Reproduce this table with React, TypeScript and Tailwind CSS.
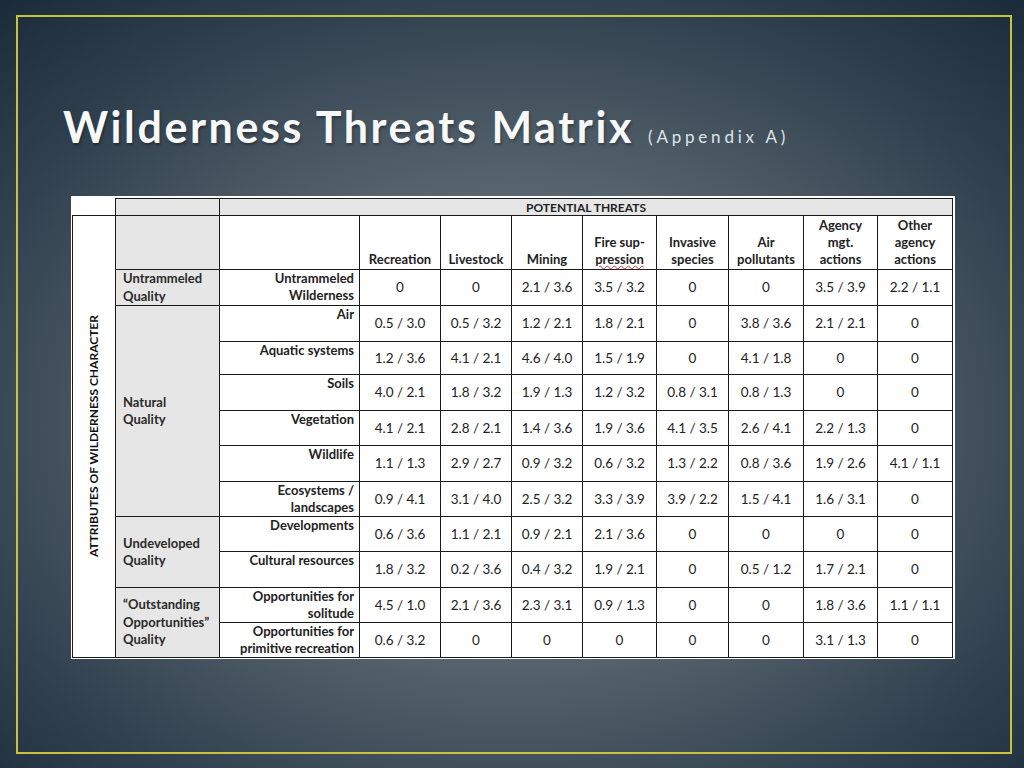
import React from "react";

const cols = [43, 104, 140, 81, 71, 71, 74, 72, 75, 74, 75];

type Row = { attr: string[]; vals: string[]; h: number; q?: { lines: string[]; span: number; top?: boolean } };

const rows: Row[] = [
  { q: { lines: ["Untrammeled", "Quality"], span: 1, top: true }, attr: ["Untrammeled", "Wilderness"], vals: ["0", "0", "2.1 / 3.6", "3.5 / 3.2", "0", "0", "3.5 / 3.9", "2.2 / 1.1"], h: 35 },
  { q: { lines: ["Natural", "Quality"], span: 6 }, attr: ["Air"], vals: ["0.5 / 3.0", "0.5 / 3.2", "1.2 / 2.1", "1.8 / 2.1", "0", "3.8 / 3.6", "2.1 / 2.1", "0"], h: 36 },
  { attr: ["Aquatic systems"], vals: ["1.2 / 3.6", "4.1 / 2.1", "4.6 / 4.0", "1.5 / 1.9", "0", "4.1 / 1.8", "0", "0"], h: 33 },
  { attr: ["Soils"], vals: ["4.0 / 2.1", "1.8 / 3.2", "1.9 / 1.3", "1.2 / 3.2", "0.8 / 3.1", "0.8 / 1.3", "0", "0"], h: 36 },
  { attr: ["Vegetation"], vals: ["4.1 / 2.1", "2.8 / 2.1", "1.4 / 3.6", "1.9 / 3.6", "4.1 / 3.5", "2.6 / 4.1", "2.2 / 1.3", "0"], h: 35 },
  { attr: ["Wildlife"], vals: ["1.1 / 1.3", "2.9 / 2.7", "0.9 / 3.2", "0.6 / 3.2", "1.3 / 2.2", "0.8 / 3.6", "1.9 / 2.6", "4.1 / 1.1"], h: 36 },
  { attr: ["Ecosystems /", "landscapes"], vals: ["0.9 / 4.1", "3.1 / 4.0", "2.5 / 3.2", "3.3 / 3.9", "3.9 / 2.2", "1.5 / 4.1", "1.6 / 3.1", "0"], h: 35 },
  { q: { lines: ["Undeveloped", "Quality"], span: 2 }, attr: ["Developments"], vals: ["0.6 / 3.6", "1.1 / 2.1", "0.9 / 2.1", "2.1 / 3.6", "0", "0", "0", "0"], h: 35 },
  { attr: ["Cultural resources"], vals: ["1.8 / 3.2", "0.2 / 3.6", "0.4 / 3.2", "1.9 / 2.1", "0", "0.5 / 1.2", "1.7 / 2.1", "0"], h: 36 },
  { q: { lines: ["\u201COutstanding", "Opportunities\u201D", "Quality"], span: 2 }, attr: ["Opportunities for", "solitude"], vals: ["4.5 / 1.0", "2.1 / 3.6", "2.3 / 3.1", "0.9 / 1.3", "0", "0", "1.8 / 3.6", "1.1 / 1.1"], h: 35 },
  { attr: ["Opportunities for", "primitive recreation"], vals: ["0.6 / 3.2", "0", "0", "0", "0", "0", "3.1 / 1.3", "0"], h: 34 },
];

const bd = "border border-[#1a1a1a]";

export default function App() {
  return (
    <div
      className="w-[1024px] h-[768px] overflow-hidden pt-[15px] pl-[16px] bg-[radial-gradient(ellipse_75%_75%_at_50%_55%,#6e7a84_0%,#58656f_40%,#30404e_75%,#1b2a39_100%)]"
      style={{ fontFamily: "Lato, 'Noto Sans', sans-serif" }}
    >
      <div className="w-[996px] h-[739px] border-2 border-[#c8c23c] flex flex-col">
        <div className="pl-[45px] pt-[84px] h-[179px] flex items-baseline text-white">
          <span className="text-[43px] leading-[52px] font-bold tracking-[2.6px] text-[#f6f8fa] [text-shadow:1px_2px_3px_rgba(0,0,0,0.35)]">
            Wilderness Threats Matrix
          </span>
          <span className="ml-[14px] text-[17px] tracking-[3.8px] text-[#dfe5ea]">(Appendix A)</span>
        </div>
        <div className="ml-[53px] w-[884px] bg-white pt-[2px] pb-[1px] pl-[1px]">
          <table
            className="border-collapse table-fixed text-[#222] text-[13px]"
            style={{ fontFamily: "Lato, 'Noto Sans', sans-serif" }}
          >
            <colgroup>
              {cols.map((w, i) => (
                <col key={i} style={{ width: w }} />
              ))}
            </colgroup>
            <tbody>
              <tr className="h-[17px]">
                <td className="p-0"></td>
                <td className={`${bd} bg-[#e6e6e6] p-0`}></td>
                <td colSpan={9} className={`${bd} bg-[#e6e6e6] p-0 text-center font-bold text-[12px] leading-[15px]`}>
                  POTENTIAL THREATS
                </td>
              </tr>
              <tr className="h-[54px]">
                <td rowSpan={13} className={`${bd} p-0 align-middle text-center`}>
                  <div className="flex items-center justify-center">
                    <span className="[writing-mode:vertical-rl] rotate-180 font-bold text-[12px] leading-[14px] tracking-[0px] whitespace-nowrap text-[#111]">
                      ATTRIBUTES OF WILDERNESS CHARACTER
                    </span>
                  </div>
                </td>
                <td className={`${bd} bg-[#e6e6e6] p-0`}></td>
                <td className={`${bd} p-0`}></td>
                {[
                  ["Recreation"],
                  ["Livestock"],
                  ["Mining"],
                  ["Fire sup-", "pression"],
                  ["Invasive", "species"],
                  ["Air", "pollutants"],
                  ["Agency", "mgt.", "actions"],
                  ["Other", "agency", "actions"],
                ].map((lines, i) => (
                  <td key={i} className={`${bd} p-0 pb-[1px] align-bottom text-center font-bold leading-[17px]`}>
                    {lines.map((l, j) => (
                      <div key={j}>
                        {i === 3 && j === 1 ? (
                          <span className="underline decoration-wavy decoration-[#e03030] decoration-[1px] underline-offset-[1px]">{l}</span>
                        ) : (
                          l
                        )}
                      </div>
                    ))}
                  </td>
                ))}
              </tr>
              {rows.map((r, ri) => (
                <tr key={ri} style={{ height: r.h }}>
                  {r.q && (
                    <td
                      rowSpan={r.q.span}
                      className={`${bd} bg-[#e6e6e6] pl-[7px] pr-0 font-bold leading-[17.5px] text-[#2a2a2a] ${r.q.top ? "align-top pt-0" : "align-middle"}`}
                    >
                      {r.q.lines.map((l, j) => (
                        <div key={j}>{l}</div>
                      ))}
                    </td>
                  )}
                  <td className={`${bd} align-top text-right pr-[5px] pt-0 font-bold leading-[17px]`}>
                    {r.attr.map((l, j) => (
                      <div key={j}>{l}</div>
                    ))}
                  </td>
                  {r.vals.map((v, vi) => (
                    <td key={vi} className={`${bd} p-0 text-center align-middle text-[13.5px]`}>
                      {v}
                    </td>
                  ))}
                </tr>
              ))}
            </tbody>
          </table>
        </div>
      </div>
    </div>
  );
}
